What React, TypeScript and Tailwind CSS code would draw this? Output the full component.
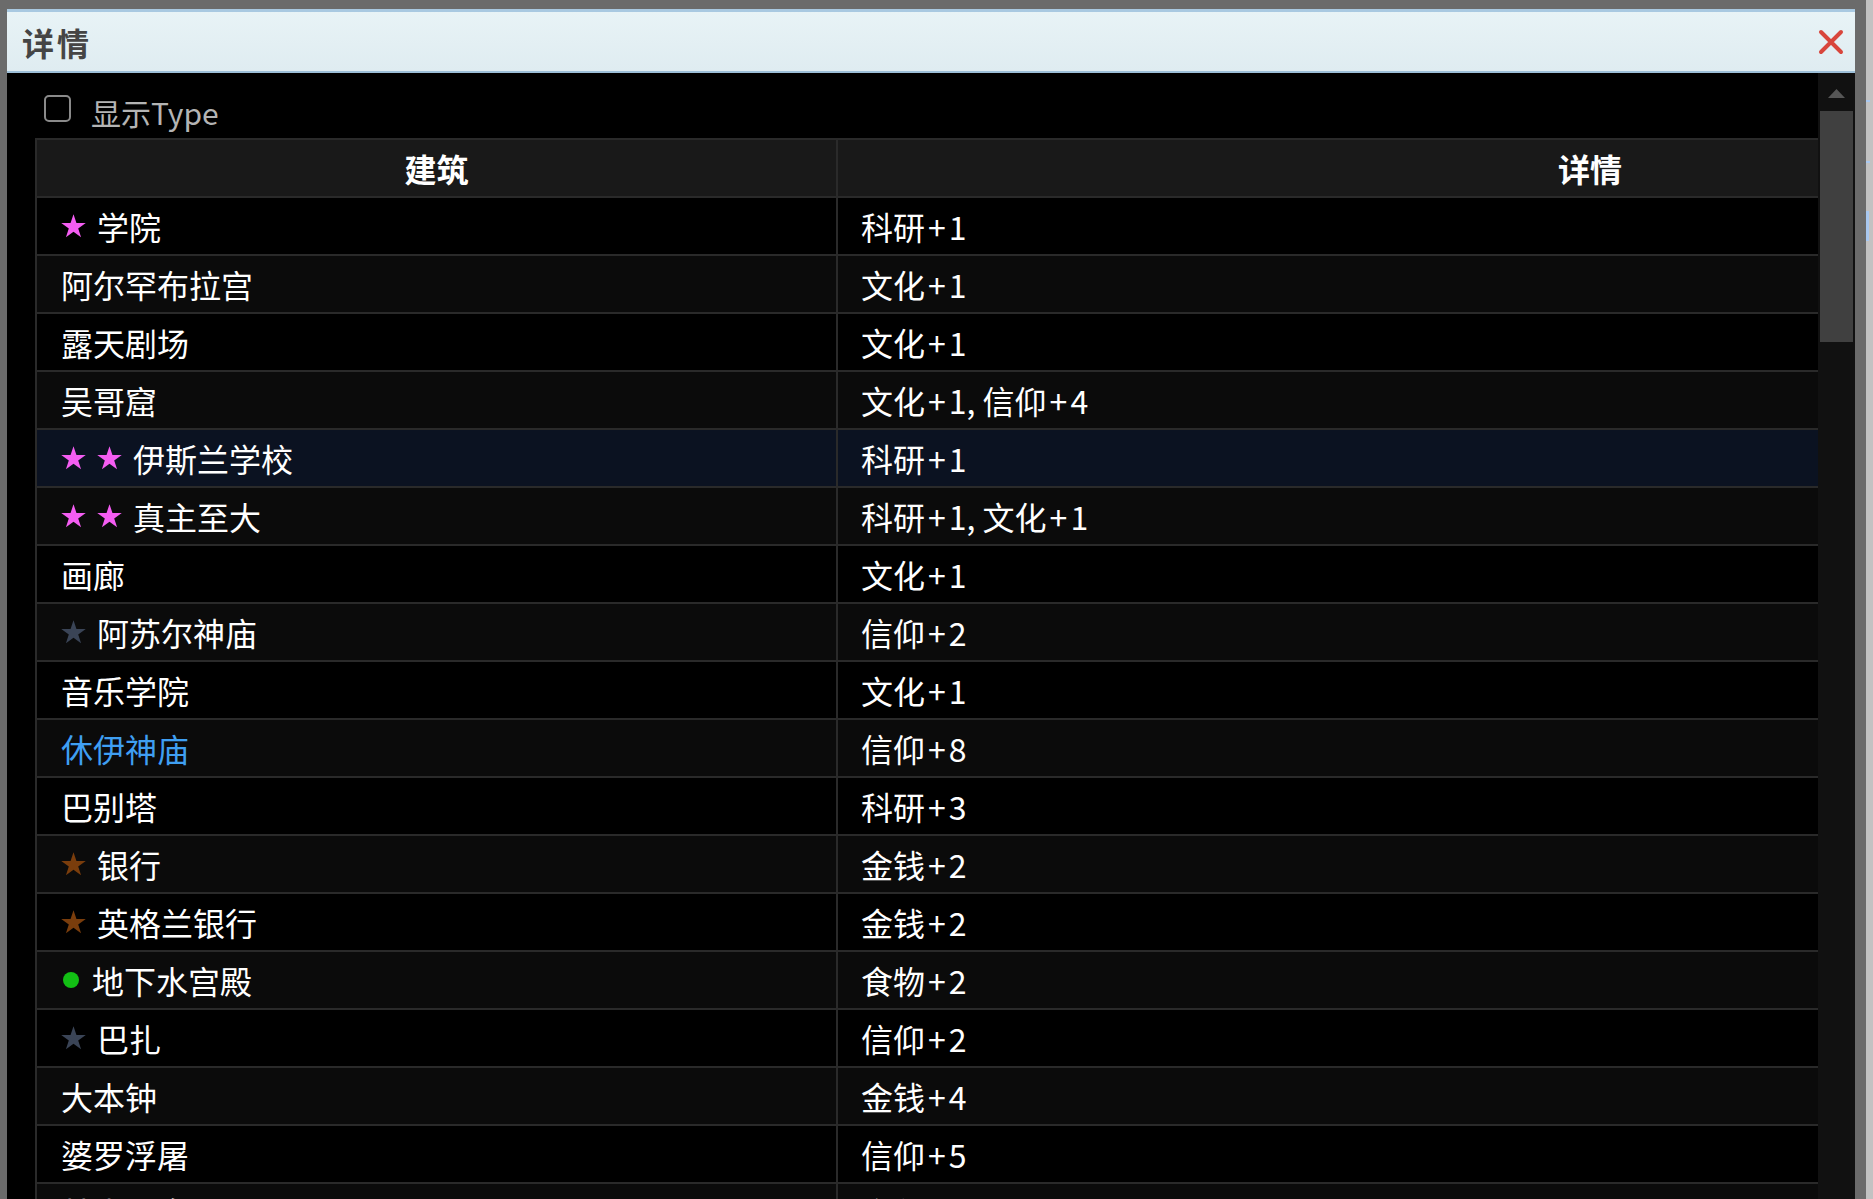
import React from 'react'

type Mark = 'pink' | 'brown' | 'slate' | 'green'

interface Row {
  name: string
  detail: string
  marks?: Mark[]
  blue?: boolean
}

const rows: Row[] = [
  { name: '学院', detail: '科研+1', marks: ['pink'] },
  { name: '阿尔罕布拉宫', detail: '文化+1' },
  { name: '露天剧场', detail: '文化+1' },
  { name: '吴哥窟', detail: '文化+1, 信仰+4' },
  { name: '伊斯兰学校', detail: '科研+1', marks: ['pink', 'pink'] },
  { name: '真主至大', detail: '科研+1, 文化+1', marks: ['pink', 'pink'] },
  { name: '画廊', detail: '文化+1' },
  { name: '阿苏尔神庙', detail: '信仰+2', marks: ['slate'] },
  { name: '音乐学院', detail: '文化+1' },
  { name: '休伊神庙', detail: '信仰+8', blue: true },
  { name: '巴别塔', detail: '科研+3' },
  { name: '银行', detail: '金钱+2', marks: ['brown'] },
  { name: '英格兰银行', detail: '金钱+2', marks: ['brown'] },
  { name: '地下水宫殿', detail: '食物+2', marks: ['green'] },
  { name: '巴扎', detail: '信仰+2', marks: ['slate'] },
  { name: '大本钟', detail: '金钱+4' },
  { name: '婆罗浮屠', detail: '信仰+5' },
  { name: '林肯纪念堂', detail: '文化+1' },
]

const starFill: Record<Exclude<Mark, 'green'>, string> = {
  pink: 'fill-[#f45df2]',
  brown: 'fill-[#7a3d0c]',
  slate: 'fill-[#3a4456]',
}

function Marker({ mark }: { mark: Mark }) {
  if (mark === 'green') {
    return <span className="ml-[2px] mr-[13px] w-[16px] h-[16px] rounded-full bg-[#12bf14] shrink-0" />
  }
  return (
    <svg viewBox="0 0 100 95" className={`w-[25px] h-[24px] mr-[11px] shrink-0 ${starFill[mark]}`}>
      <polygon points="50,0 61.8,35.3 99,35.3 68.8,57.1 80.3,92.7 50,70.8 19.7,92.7 31.2,57.1 1,35.3 38.2,35.3" />
    </svg>
  )
}

// the "+" in the game font is set a little wider than in Noto
function Detail({ text }: { text: string }) {
  const parts = text.split('+')
  return (
    <>
      {parts.map((p, i) => (
        <React.Fragment key={i}>
          {i > 0 && <span className="mx-[3px]">+</span>}
          {p}
        </React.Fragment>
      ))}
    </>
  )
}

export default function App() {
  return (
    <div className="w-[1873px] h-[1199px] overflow-hidden bg-[#6b6b6b] flex font-['Noto_Sans_CJK_SC','Microsoft_YaHei',sans-serif]">
      <div className="w-[7px] shrink-0" />

      {/* dialog */}
      <div className="w-[1848px] shrink-0 mt-[9px] flex flex-col">
        {/* title bar */}
        <div className="h-[64px] shrink-0 border-t-[3px] border-b-2 border-t-[#a9c9e1] border-b-[#9dbfd8] bg-gradient-to-b from-[#e8f3f6] to-[#dfecf1] flex items-center justify-between pl-[15px] pr-[11px]">
          <span className="text-[32px] font-bold text-[#454545] tracking-[3px] leading-none">详情</span>
          <svg viewBox="0 0 26 26" className="w-[26px] h-[26px]">
            <path d="M3 3 L23 23 M23 3 L3 23" stroke="#d8463c" strokeWidth="4" strokeLinecap="round" />
          </svg>
        </div>

        {/* body */}
        <div className="flex-1 bg-black flex">
          <div className="w-[1811px] shrink-0 pl-[28px] flex flex-col">
            <div className="h-[65px] shrink-0 flex items-start">
              <span className="mt-[22px] ml-[9px] w-[27px] h-[27px] rounded-[5px] border-2 border-[#8a8a8a] shrink-0" />
              <span className="mt-[21px] ml-[20px] text-[30px] leading-[36px] text-[#b4b4b4]">显示Type</span>
            </div>

            {/* table */}
            <div className="border-l-2 border-t-2 border-[#2a2a2a] flex flex-col">
              <div className="h-[58px] shrink-0 flex border-b-2 border-[#2a2a2a] bg-[#191919] text-white font-bold text-[32px]">
                <div className="w-[801px] shrink-0 border-r-2 border-[#2a2a2a] flex items-center justify-center">建筑</div>
                <div className="flex-1 flex items-center pl-[720px]">详情</div>
              </div>
              {rows.map((r, i) => (
                <div
                  key={r.name}
                  className={`h-[58px] shrink-0 flex border-b-2 border-[#2a2a2a] text-[32px] leading-none ${
                    i === 4 ? 'bg-[#0b1221]' : i % 2 === 0 ? 'bg-black' : 'bg-[#0b0b0b]'
                  }`}
                >
                  <div className="w-[801px] shrink-0 border-r-2 border-[#2a2a2a] flex items-center pl-[24px] pb-[1px]">
                    {r.marks?.map((m, j) => <Marker key={j} mark={m} />)}
                    <span className={r.blue ? 'text-[#3f9ff2]' : 'text-white'}>{r.name}</span>
                  </div>
                  <div className="flex-1 flex items-center pl-[23px] pb-[1px] text-white">
                    <Detail text={r.detail} />
                  </div>
                </div>
              ))}
            </div>
          </div>

          {/* scrollbar */}
          <div className="w-[37px] shrink-0 bg-[#111111] flex flex-col items-center">
            <div className="h-[38px] w-full flex items-center justify-center">
              <svg viewBox="0 0 17 9" className="w-[17px] h-[9px] mt-[3px]">
                <polygon points="8.5,0 17,9 0,9" fill="#565656" />
              </svg>
            </div>
            <div className="w-[33px] h-[231px] bg-[#404040]" />
          </div>
        </div>
      </div>

      <div className="w-[11px] shrink-0" />
      {/* neighbouring window edge */}
      <div className="w-[7px] shrink-0 bg-[#c2c2c2] flex flex-col">
        <div className="h-[100px]" />
        <div className="h-[2px] w-[4px] bg-[#a9c8f0]" />
        <div className="h-[59px]" />
        <div className="h-[2px] w-[4px] bg-[#a9c8f0]" />
        <div className="h-[48px]" />
        <div className="h-[30px] w-[3px] bg-[#a9c8f0]" />
      </div>
    </div>
  )
}
